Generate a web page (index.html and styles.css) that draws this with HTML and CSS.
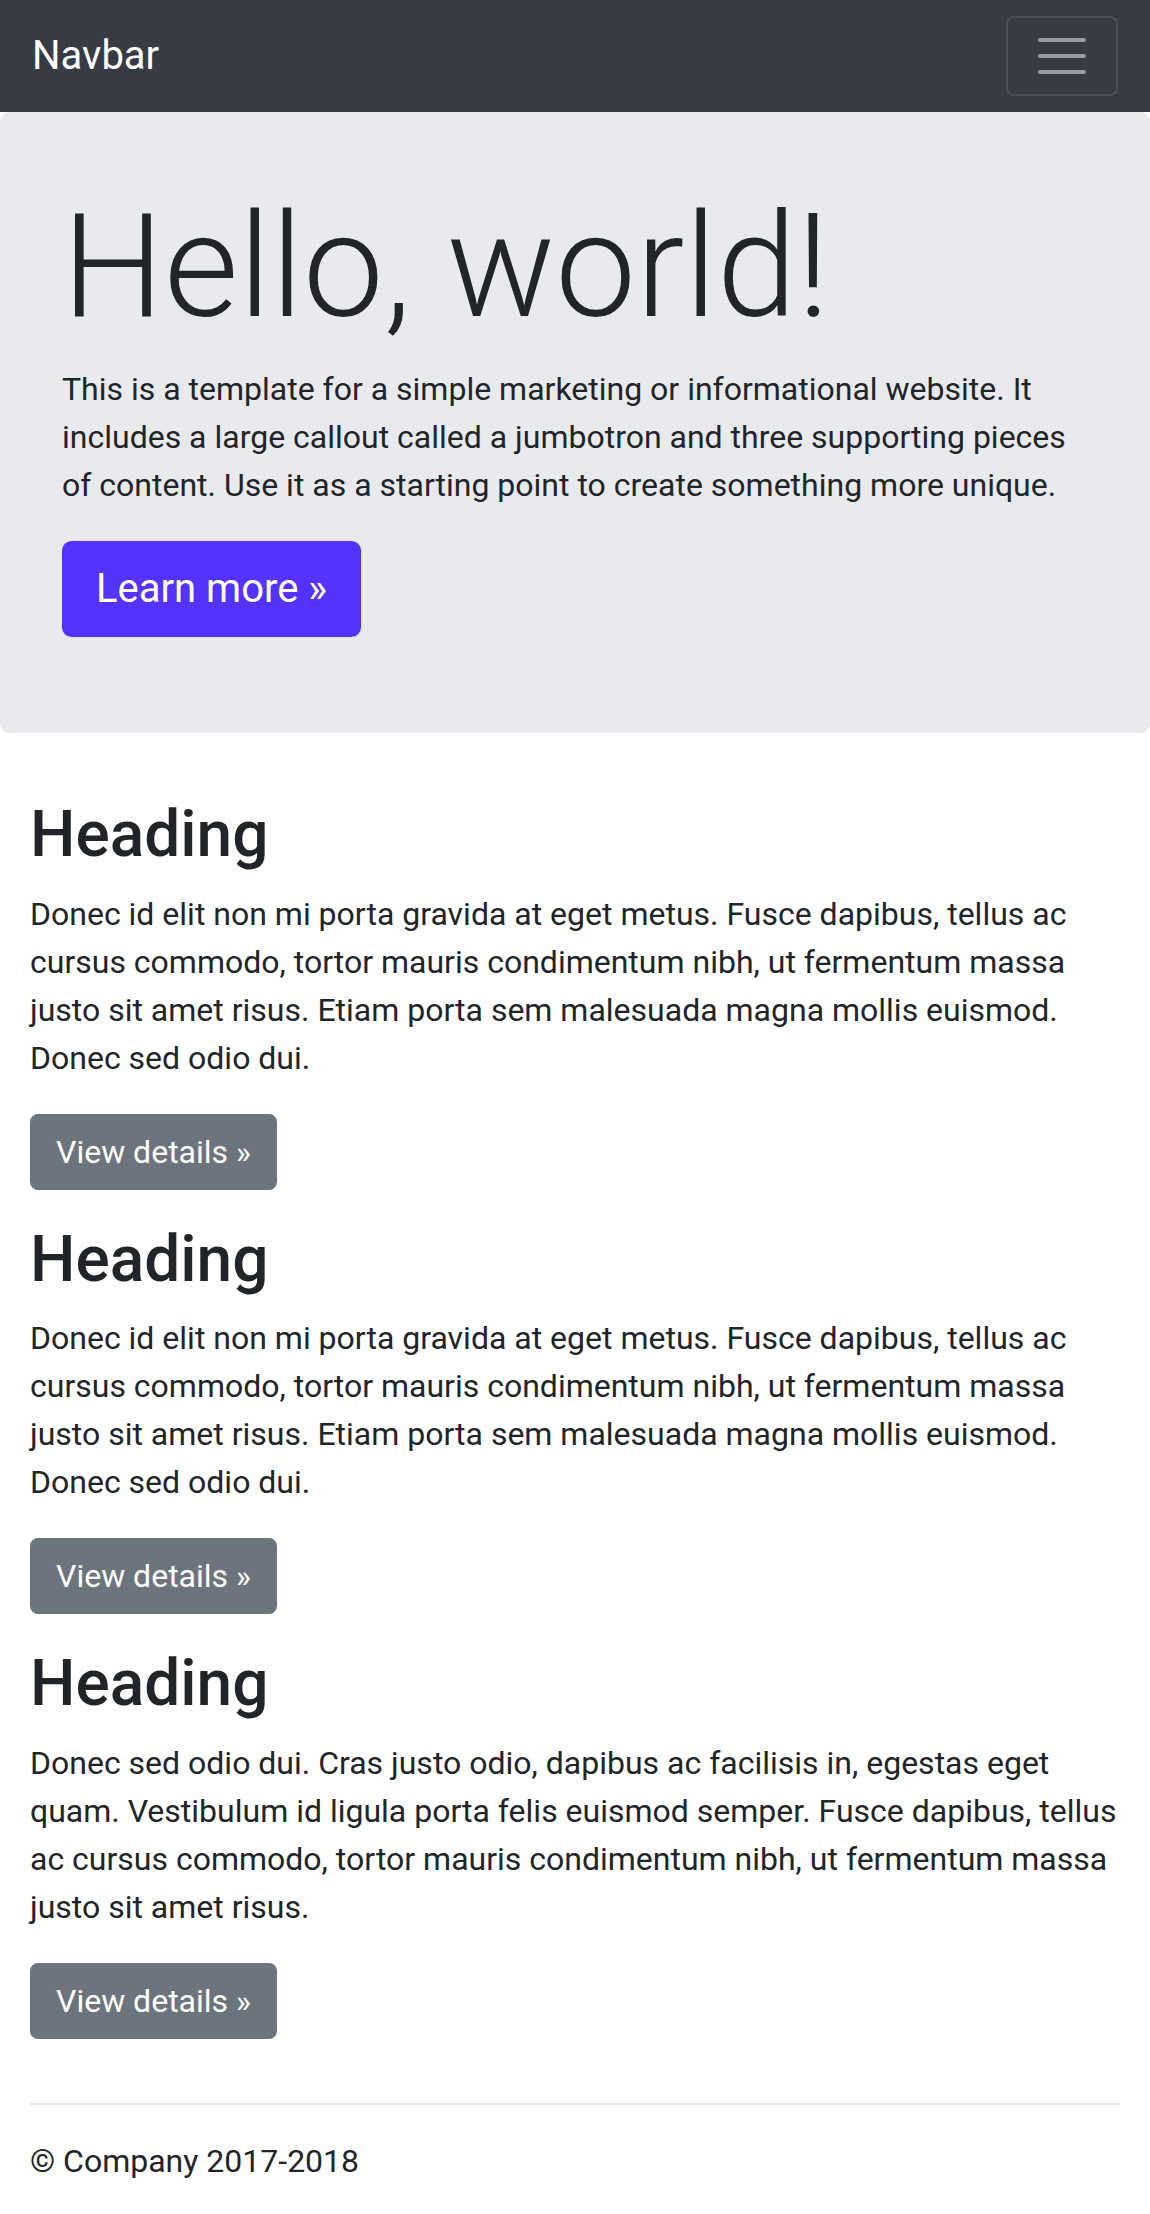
FILE: index.html
```html
<!DOCTYPE html>
<html lang="en">
<head>
<meta charset="utf-8">
<title>Jumbotron</title>
<link rel="stylesheet" href="styles.css">
</head>
<body>
<nav class="navbar">
  <a class="navbar-brand" href="#">Navbar</a>
  <button class="navbar-toggler" type="button" aria-label="Toggle navigation">
    <svg class="toggler-icon" viewBox="0 0 30 30" width="60" height="60" aria-hidden="true">
      <path stroke="rgba(255,255,255,0.5)" stroke-linecap="round" stroke-miterlimit="10" stroke-width="2" d="M4 7h22M4 15h22M4 23h22"/>
    </svg>
  </button>
</nav>
<main>
  <div class="jumbotron">
    <div class="container">
      <h1 class="display-3">Hello, world!</h1>
      <p>This is a template for a simple marketing or informational website. It includes a large callout called a jumbotron and three supporting pieces of content. Use it as a starting point to create something more unique.</p>
      <p><a class="btn btn-primary btn-lg" href="#" role="button">Learn more &raquo;</a></p>
    </div>
  </div>
  <div class="container">
    <div class="row">
      <div class="col">
        <h2>Heading</h2>
        <p>Donec id elit non mi porta gravida at eget metus. Fusce dapibus, tellus ac cursus commodo, tortor mauris condimentum nibh, ut fermentum massa justo sit amet risus. Etiam porta sem malesuada magna mollis euismod. Donec sed odio dui.</p>
        <p><a class="btn btn-secondary" href="#" role="button">View details &raquo;</a></p>
      </div>
      <div class="col">
        <h2>Heading</h2>
        <p>Donec id elit non mi porta gravida at eget metus. Fusce dapibus, tellus ac cursus commodo, tortor mauris condimentum nibh, ut fermentum massa justo sit amet risus. Etiam porta sem malesuada magna mollis euismod. Donec sed odio dui.</p>
        <p><a class="btn btn-secondary" href="#" role="button">View details &raquo;</a></p>
      </div>
      <div class="col">
        <h2>Heading</h2>
        <p>Donec sed odio dui. Cras justo odio, dapibus ac facilisis in, egestas eget quam. Vestibulum id ligula porta felis euismod semper. Fusce dapibus, tellus ac cursus commodo, tortor mauris condimentum nibh, ut fermentum massa justo sit amet risus.</p>
        <p><a class="btn btn-secondary" href="#" role="button">View details &raquo;</a></p>
      </div>
    </div>
    <hr class="divider">
  </div>
</main>
<footer class="container">
  <p>&copy; Company 2017-2018</p>
</footer>
</body>
</html>
```
FILE: styles.css
```css
*, *::before, *::after { box-sizing: border-box; }

html, body {
  margin: 0;
  padding: 0;
}

body {
  font-family: Roboto, "Liberation Sans", Arial, sans-serif;
  font-size: 32px;
  line-height: 1.5;
  font-weight: 400;
  color: #212529;
  background: #fff;
}

p {
  margin: 0 0 32px 0;
}

.navbar {
  display: flex;
  align-items: center;
  justify-content: space-between;
  padding: 16px 32px;
  background: #383b44;
}

.navbar-brand {
  display: inline-block;
  padding: 10px 0;
  margin-right: 32px;
  font-size: 40px;
  line-height: 1.5;
  color: #fff;
  text-decoration: none;
  white-space: nowrap;
}

.navbar-toggler {
  display: flex;
  align-items: center;
  justify-content: center;
  padding: 8px 24px;
  background: transparent;
  border: 2px solid rgba(255, 255, 255, 0.1);
  border-radius: 8px;
  cursor: pointer;
}

.toggler-icon {
  display: block;
  width: 60px;
  height: 60px;
}

.jumbotron {
  background: #e9eaee;
  padding: 64px 32px;
  margin-bottom: 64px;
  border-radius: 9.6px;
}

.container {
  padding: 0 30px;
}

.row {
  display: flex;
  flex-direction: column;
}

.display-3 {
  font-size: 144px;
  font-weight: 300;
  line-height: 1.2;
  padding-top: 5px;
  margin: 0 0 11px 0;
}

h2 {
  font-size: 64px;
  font-weight: 500;
  line-height: 1.2;
  margin: 0 0 16px 0;
}

.btn {
  display: inline-block;
  font-weight: 400;
  text-align: center;
  vertical-align: middle;
  white-space: nowrap;
  border: 2px solid transparent;
  padding: 12px 24px;
  font-size: 32px;
  line-height: 1.5;
  border-radius: 8px;
  color: #fff;
  text-decoration: none;
}

.btn-lg {
  padding: 16px 32px;
  font-size: 40px;
  line-height: 1.5;
  border-radius: 9.6px;
}

.btn-primary {
  background: #5533ff;
  border-color: #5533ff;
}

.btn-secondary {
  background: #6c757d;
  border-color: #6c757d;
}

.divider {
  box-sizing: content-box;
  height: 0;
  margin: 32px 0;
  border: 0;
  border-top: 2px solid rgba(0, 0, 0, 0.1);
}
```
